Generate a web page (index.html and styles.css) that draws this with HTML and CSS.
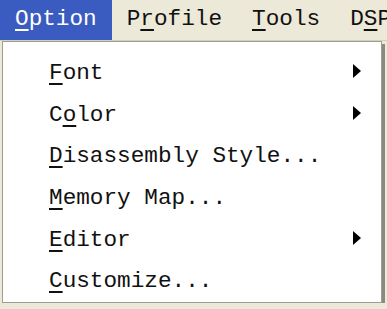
FILE: index.html
```html
<!DOCTYPE html>
<html lang="en">
<head>
    <meta charset="UTF-8">
    <title>Option Menu</title>
    <link rel="stylesheet" href="styles.css">
</head>
<body>
    <div class="menubar">
        <span class="menubar-item active"><u>O</u>ption</span>
        <span class="menubar-item">P<u>r</u>ofile</span>
        <span class="menubar-item"><u>T</u>ools</span>
        <span class="menubar-item">D<u>S</u>P</span>
    </div>
    <div class="dropdown">
        <div class="menu-item"><span><u>F</u>ont</span><span class="arrow"></span></div>
        <div class="menu-item"><span>C<u>o</u>lor</span><span class="arrow"></span></div>
        <div class="menu-item"><span><u>D</u>isassembly Style...</span></div>
        <div class="menu-item"><span><u>M</u>emory Map...</span></div>
        <div class="menu-item"><span><u>E</u>ditor</span><span class="arrow"></span></div>
        <div class="menu-item"><span><u>C</u>ustomize...</span></div>
    </div>
</body>
</html>
```

FILE: styles.css
```css
body {
    margin: 0;
    background-color: #ece9d8;
    font-family: "Liberation Mono", monospace;
    font-size: 22.7px;
    color: #111111;
    overflow: hidden;
}
u {
    text-underline-offset: 4px;
    text-decoration-thickness: 2px;
}
.menubar {
    display: flex;
    height: 41px;
    align-items: stretch;
    white-space: nowrap;
    border-bottom: 1px solid #d4d0c0;
    box-sizing: border-box;
}
.menubar-item {
    display: flex;
    align-items: center;
    padding: 0 15px 2px 15px;
}
.menubar-item.active {
    background-color: #3a5bc0;
    color: #ffffff;
}
.dropdown {
    margin-left: 2px;
    width: 380px;
    height: 262px;
    background-color: #ffffff;
    border: 1px solid #9d9d92;
    box-shadow: 3px 3px 0 #8c8a80;
    padding-top: 10px;
    box-sizing: border-box;
}
.menu-item {
    display: flex;
    align-items: center;
    justify-content: space-between;
    height: 41.7px;
    padding: 0 20px 0 46px;
    white-space: pre;
}
.arrow {
    width: 0;
    height: 0;
    border-top: 7px solid transparent;
    border-bottom: 7px solid transparent;
    border-left: 8px solid #000000;
    margin-bottom: 4px;
}
```
